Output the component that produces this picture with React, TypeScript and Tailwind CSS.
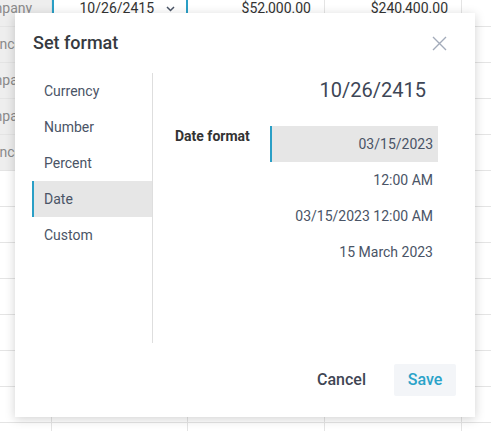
import { useState } from "react";

const rows = [
  { name: "Company", date: "10/26/2415", a: "$52,000.00", b: "$240,400.00" },
  { name: "Finance", date: "", a: "", b: "" },
  { name: "Company", date: "", a: "", b: "" },
  { name: "Company", date: "", a: "", b: "" },
  { name: "Finance", date: "", a: "", b: "" },
  null,
  null,
  null,
  null,
  null,
  null,
  null,
  null,
];

const kinds = ["Currency", "Number", "Percent", "Date", "Custom"];
const formats = ["03/15/2023", "12:00 AM", "03/15/2023 12:00 AM", "15 March 2023"];

function Sheet() {
  return (
    <div className="-mt-[9px]">
      {rows.map((row, i) => (
        <div key={i} className="flex h-[36px] border-b border-[#e4e4e4]">
          {/* first column runs off the left edge */}
          <div
            className={
              "w-[52px] shrink-0 overflow-hidden flex items-center border-r border-[#e4e4e4] " +
              (row ? "bg-[#eeeeee] text-[#8a8a8a]" : "bg-white")
            }
          >
            {row && <span className="-ml-[27px] whitespace-nowrap text-[14px]">{row.name}</span>}
          </div>
          <div
            className={
              "w-[136px] shrink-0 flex items-center justify-end pr-[11px] text-[14px] text-[#333]" +
              (i === 0 ? " border-x-2 border-[#2a9fc6]" : " border-r border-[#e4e4e4]")
            }
          >
            {row?.date && (
              <>
                <span>{row.date}</span>
                <svg width="9" height="6" viewBox="0 0 9 6" className="ml-[12px]">
                  <path d="M1 1l3.5 3.5L8 1" fill="none" stroke="#4a5466" strokeWidth="1.5" />
                </svg>
              </>
            )}
          </div>
          <div className="w-[137px] shrink-0 flex items-center justify-end pr-[13px] border-r border-[#e4e4e4] text-[14px] text-[#333]">
            {row?.a}
          </div>
          <div className="w-[137px] shrink-0 flex items-center justify-end pr-[13px] border-r border-[#e4e4e4] text-[14px] text-[#333]">
            {row?.b}
          </div>
          <div className="flex-1" />
        </div>
      ))}
    </div>
  );
}

export default function App() {
  const [kind, setKind] = useState("Date");
  const [format, setFormat] = useState(formats[0]);

  return (
    <div className="relative w-[491px] h-[431px] overflow-hidden bg-white font-['Roboto',sans-serif]">
      <Sheet />

      {/* Set format dialog */}
      <div className="absolute left-[15px] top-[13px] w-[460px] h-[404px] bg-white flex flex-col shadow-[0_2px_10px_rgba(0,0,0,0.18)]">
        <div className="flex items-center justify-between pl-[18px] pr-[28px] pt-[18px]">
          <h2 className="text-[18px] leading-[24px] font-medium text-[#363a40]">Set format</h2>
          <svg width="15" height="15" viewBox="0 0 15 15">
            <path d="M1 1l13 13M14 1L1 14" stroke="#a3abba" strokeWidth="1.4" fill="none" />
          </svg>
        </div>

        <div className="flex mt-[18px] h-[270px]">
          <div className="ml-[17px] w-[121px] border-r border-[#dedede]">
            {kinds.map((k) => (
              <div
                key={k}
                onClick={() => setKind(k)}
                className={
                  "h-[36px] flex items-center text-[14px] text-[#4a5466] cursor-pointer " +
                  (k === kind ? "bg-[#e6e6e6] border-l-2 border-[#2a9fc6] pl-[10px]" : "pl-[12px]")
                }
              >
                {k}
              </div>
            ))}
          </div>

          <div className="flex-1 pl-[22px]">
            <div className="pt-[3px] pr-[49px] text-right text-[20px] leading-[28px] text-[#3d4656]">10/26/2415</div>
            <div className="flex items-start mt-[22px]">
              <div className="w-[95px] text-[14px] leading-[20px] font-bold text-[#333]">Date format</div>
              <div className="w-[168px]">
                {formats.map((f) => (
                  <div
                    key={f}
                    onClick={() => setFormat(f)}
                    className={
                      "h-[36px] flex items-center justify-end pr-[5px] text-[14px] text-[#4a5466] cursor-pointer " +
                      (f === format ? "bg-[#e6e6e6] border-l-2 border-[#2a9fc6]" : "")
                    }
                  >
                    {f}
                  </div>
                ))}
              </div>
            </div>
          </div>
        </div>

        <div className="flex items-center justify-end gap-[28px] mt-[21px] pr-[19px]">
          <button className="text-[16px] font-medium text-[#3f4654]">Cancel</button>
          <button className="w-[62px] h-[32px] rounded-[2px] bg-[#f3f5f8] text-[16px] font-medium text-[#2ba3c9]">
            Save
          </button>
        </div>
      </div>
    </div>
  );
}
